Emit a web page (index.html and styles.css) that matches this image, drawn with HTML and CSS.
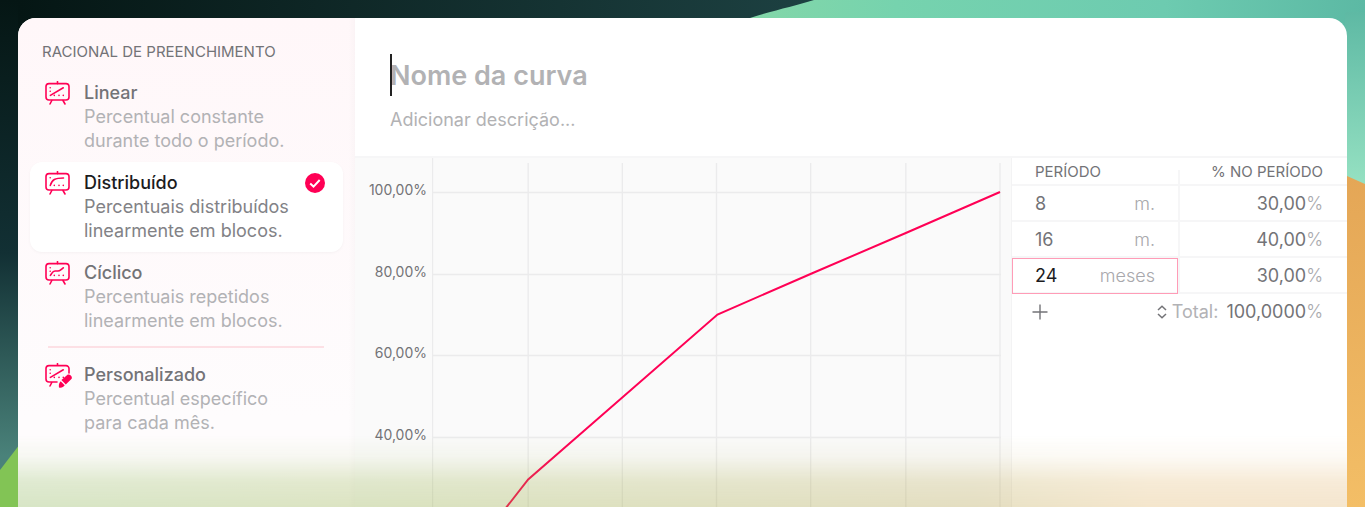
FILE: index.html
```html
<!DOCTYPE html>
<html lang="pt-BR">
<head>
	<meta charset="utf-8">
	<title>Curva</title>
	<link rel="stylesheet" href="styles.css">
</head>
<body>
	<svg class="wallpaper" viewBox="0 0 1365 507" preserveAspectRatio="none" aria-hidden="true">
		<defs>
			<linearGradient id="night" gradientUnits="userSpaceOnUse" x1="0" y1="0" x2="0" y2="507">
				<stop offset="0" stop-color="#051614"/>
				<stop offset=".5" stop-color="#123034"/>
				<stop offset=".9" stop-color="#4a827a"/>
			</linearGradient>
			<linearGradient id="nightTop" x1="0" y1="0" x2="1" y2="0">
				<stop offset="0" stop-color="#051614"/>
				<stop offset="1" stop-color="#1e4344"/>
			</linearGradient>
			<linearGradient id="mint" x1="0" y1="0" x2="1" y2="0">
				<stop offset="0" stop-color="#88d8a6"/>
				<stop offset=".3" stop-color="#76d3ae"/>
				<stop offset=".7" stop-color="#6dcbb0"/>
				<stop offset="1" stop-color="#5cb9a4"/>
			</linearGradient>
			<linearGradient id="mintSide" x1="0" y1="0" x2="0" y2="1">
				<stop offset="0" stop-color="#5eb9a4"/>
				<stop offset="1" stop-color="#9be5c5"/>
			</linearGradient>
			<linearGradient id="sand" x1="0" y1="0" x2="0" y2="1">
				<stop offset="0" stop-color="#e4a656"/>
				<stop offset="1" stop-color="#f3be66"/>
			</linearGradient>
		</defs>
		<rect width="1365" height="507" fill="url(#night)"/>
		<rect x="18" width="840" height="40" fill="url(#nightTop)"/>
		<path d="M695 36L750 18C775 10 795 6 814 0H1365V40H695z" fill="url(#mint)"/>
		<rect x="1345" y="12" width="20" height="190" fill="url(#mintSide)"/>
		<path d="M1340 173L1347 176L1365 184V507H1340z" fill="url(#sand)"/>
		<path d="M0 470L20 444V507H0z" fill="#82c455"/>
	</svg>

	<div class="window">
		<aside class="sidebar">
			<h2 class="caption">RACIONAL DE PREENCHIMENTO</h2>

			<label class="option">
				<input type="radio" name="racional">
				<svg class="option-icon" viewBox="0 1 28 28">
					<rect x="2" y="3.600" width="23" height="16.400" rx="3"/>
					<path d="M13.500 1.600v2M7.800 20.500L6 24M19 20.500L21 24M6.400 15.400L19.300 7.800"/>
					<path class="dots" d="M6.200 7.700h0M6.200 11.200h0M10.300 15.400h0M15 15.400h0M19.300 15.400h0"/>
				</svg>
				<span class="option-text">
					<span class="option-name">Linear</span>
					<span class="option-about">Percentual constante durante todo o período.</span>
				</span>
			</label>

			<label class="option selected">
				<input type="radio" name="racional" checked>
				<svg class="option-icon" viewBox="0 1 28 28">
					<rect x="2" y="3.600" width="23" height="16.400" rx="3"/>
					<path d="M13.500 1.600v2M7.800 20.500L6 24M19 20.500L21 24M6.300 15.400C8 9.500 11 8 19.500 8"/>
					<path class="dots" d="M6.200 7.700h0M10.300 15.400h0M15 15.400h0M19.300 15.400h0"/>
				</svg>
				<span class="option-text">
					<span class="option-name">Distribuído</span>
					<span class="option-about">Percentuais distribuídos linearmente em blocos.</span>
				</span>
				<svg class="check" viewBox="0 0 20 20">
					<circle cx="10" cy="10" r="10"/>
					<path d="M5.200 10.600L8.500 13.600L14.700 7"/>
				</svg>
			</label>

			<label class="option">
				<input type="radio" name="racional">
				<svg class="option-icon" viewBox="0 1 28 28">
					<rect x="2" y="3.600" width="23" height="16.400" rx="3"/>
					<path d="M13.500 1.600v2M7.800 20.500L6 24M19 20.500L21 24M6.400 15.400C8.500 12.500 8.500 11 11 11C16 11 15.500 11 19.300 7.800"/>
					<path class="dots" d="M6.200 7.700h0M6.200 11.200h0M10.300 15.400h0M15 15.400h0M19.300 15.400h0"/>
				</svg>
				<span class="option-text">
					<span class="option-name">Cíclico</span>
					<span class="option-about">Percentuais repetidos linearmente em blocos.</span>
				</span>
			</label>

			<hr class="divider">

			<label class="option">
				<input type="radio" name="racional">
				<svg class="option-icon" viewBox="0 1 28 28">
					<path d="M13 20H5a3 3 0 0 1-3-3V6.600a3 3 0 0 1 3-3H22a3 3 0 0 1 3 3V11M13.500 1.600v2M7.800 20.500L6 24M6.400 15.400L19.300 7.800"/>
					<path class="dots" d="M6.200 7.700h0M6.200 11.200h0M10.300 15.400h0M15 15.400h0M19.300 15.400h0"/>
					<path class="pencil" d="M17.400 18L23.200 12.900C25.300 11.200 29.300 14.700 27.400 17L21.800 22.600zM16.700 19.200L20.700 23.300C19.500 25.200 17.500 26.200 15 25.600C14.500 23 15.200 20.600 16.700 19.200z"/>
				</svg>
				<span class="option-text">
					<span class="option-name">Personalizado</span>
					<span class="option-about">Percentual específico para cada mês.</span>
				</span>
			</label>
		</aside>

		<main class="main">
			<header class="header">
				<div class="name-row">
					<input class="name" type="text" placeholder="Nome da curva" aria-label="Nome da curva">
					<span class="caret"></span>
				</div>
				<input class="about" type="text" placeholder="Adicionar descrição..." aria-label="Adicionar descrição">
			</header>

			<div class="content">
				<section class="chart">
					<div class="axis">
						<span>100,00%</span>
						<span>80,00%</span>
						<span>60,00%</span>
						<span>40,00%</span>
					</div>
					<svg class="plot" viewBox="0 0 568 444" preserveAspectRatio="none">
						<path class="grid" d="M.500 0V444M96 5V444M190 5V444M284 5V444M378 5V444M473 5V444M567 5V444"/>
						<path class="grid" d="M0 34.500H568M0 116.500H568M0 197.500H568M0 279.500H568M0 361.500H568M0 443H568"/>
						<path class="curve" d="M1 443L96 321.500L285 156.500L379 115.500L473 75L567 34"/>
					</svg>
				</section>

				<section class="periods">
					<table>
						<thead>
							<tr><th>PERÍODO</th><th>% NO PERÍODO</th></tr>
						</thead>
						<tbody>
							<tr>
								<td><div class="cell"><input type="text" value="8" aria-label="Período 1"><span>m.</span></div></td>
								<td><div class="cell"><input type="text" value="30,00" aria-label="Percentual 1"><span>%</span></div></td>
							</tr>
							<tr>
								<td><div class="cell"><input type="text" value="16" aria-label="Período 2"><span>m.</span></div></td>
								<td><div class="cell"><input type="text" value="40,00" aria-label="Percentual 2"><span>%</span></div></td>
							</tr>
							<tr>
								<td class="active"><div class="cell"><input type="text" value="24" aria-label="Período 3"><span>meses</span></div></td>
								<td><div class="cell"><input type="text" value="30,00" aria-label="Percentual 3"><span>%</span></div></td>
							</tr>
						</tbody>
					</table>
					<div class="total-row">
						<button class="add" type="button" aria-label="Adicionar">
							<svg viewBox="0 0 16 16"><path d="M8 .500v15M.500 8h15"/></svg>
						</button>
						<button class="total" type="button">
							<svg viewBox="0 0 12 16"><path d="M2 6L6 2.200L10 6M2 10L6 13.800L10 10"/></svg>
							<span class="total-label">Total:</span>
							<span class="total-value">100,0000<i>%</i></span>
						</button>
					</div>
				</section>
			</div>
		</main>
		<div class="haze"></div>
	</div>
</body>
</html>
```
FILE: styles.css
```css
*{
	box-sizing: border-box;
}

body{
	margin: 0;
	height: 100vh;
	padding: 18px 18px 0;
	overflow: hidden;
	display: flex;
	font-family: Inter, "Liberation Sans", sans-serif;
	font-size: 18px;
	line-height: 24px;
	color: #737377;
}

input, button{
	font: inherit;
	color: inherit;
	background: none;
	border: 0;
	padding: 0;
	margin: 0;
	min-width: 0;
	outline: none;
}

.wallpaper{
	position: absolute;
	top: 0;
	left: 0;
	width: 100%;
	height: 100%;
	z-index: -1;
}

.window{
	position: relative;
	flex: 1;
	display: flex;
	overflow: hidden;
	background: #fff;
	border-radius: 18px 18px 0 0;
}

/* sidebar */
.sidebar{
	width: 337px;
	flex: none;
	padding: 22px 12px 0;
	background: linear-gradient(90deg, transparent 330px, rgba(0,0,0,.015)), linear-gradient(#fff7f9, #fefcfd 400px);
}
.caption{
	margin: 0 0 8px;
	padding-left: 12px;
	font-size: 15px;
	font-weight: 400;
}
.option{
	display: flex;
	gap: 12px;
	padding: 9px 18px 9px 14px;
	border-radius: 12px;
}
.option input{
	position: absolute;
	opacity: 0;
}
.option.selected{
	background: #fff;
	box-shadow: 0 1px 3px rgba(0,0,0,.04);
}
.option-icon{
	flex: none;
	width: 28px;
	height: 28px;
	fill: none;
	stroke: #ff0055;
	stroke-width: 1.600;
	stroke-linecap: round;
}
.option-icon .pencil{
	fill: #ff0055;
	stroke: none;
}
.option-text{
	width: 210px;
}
.option-name, .option-about{
	display: block;
}
.option-name{
	font-weight: 500;
}
.option-about{
	color: #b2b2b5;
}
.selected .option-name{
	color: #1c1c1e;
}
.selected .option-about{
	color: #828286;
}
.check{
	flex: none;
	width: 20px;
	height: 20px;
	margin: 2px 0 0 auto;
	fill: #ff0055;
}
.check path{
	fill: none;
	stroke: #fff;
	stroke-width: 2;
}
.divider{
	height: 2px;
	margin: 4px 19px 6px 18px;
	border: 0;
	background: #fde0e5;
}

/* name and description */
.main{
	flex: 1;
	min-width: 0;
	display: flex;
	flex-direction: column;
}
.header{
	display: flex;
	flex-direction: column;
	padding: 36px 35px 24px;
	border-bottom: 2px solid #f6f6f7;
}
.name-row{
	position: relative;
	display: flex;
	margin-bottom: 12px;
}
.name{
	flex: 1;
	height: 42px;
	font-size: 27px;
	font-weight: 600;
}
.header input::placeholder{
	color: #b2b2b4;
	opacity: 1;
}
.about{
	height: 24px;
}
.caret{
	position: absolute;
	left: 0;
	top: 0;
	width: 2px;
	height: 42px;
	background: #222;
}

/* chart */
.content{
	flex: 1;
	min-height: 0;
	display: flex;
}
.chart{
	flex: 1;
	min-width: 0;
	display: flex;
	padding-right: 10px;
	overflow: hidden;
	background: #fafafa;
	border-right: 1px solid #f3f3f4;
}
.axis{
	width: 77px;
	height: 269px;
	padding-right: 5px;
	margin-top: 20px;
	flex: none;
	display: flex;
	flex-direction: column;
	justify-content: space-between;
	text-align: right;
	font-size: 14px;
}
.plot{
	flex: 1;
	min-width: 0;
	height: 444px;
	fill: none;
}
.grid{
	stroke: #ebebec;
	stroke-width: 1.400;
	vector-effect: non-scaling-stroke;
}
.curve{
	stroke: #ff0055;
	stroke-width: 2;
	vector-effect: non-scaling-stroke;
}

/* periods */
.periods{
	width: 335px;
	flex: none;
}
.periods table{
	width: 100%;
	table-layout: fixed;
	border-spacing: 0;
}
.periods th{
	height: 28px;
	padding: 2px 24px 0 23px;
	border-bottom: 2px solid #f6f6f7;
	font-size: 15px;
	font-weight: 400;
	text-align: left;
}
.periods th:first-child{
	width: 166px;
}
.periods th:last-child{
	padding-left: 0;
	text-align: right;
	background: linear-gradient(#f6f6f7, #f6f6f7) 0 100% / 2px 14px no-repeat;
}
.periods td{
	height: 36px;
	padding: 2px 24px 0 23px;
	border-bottom: 2px solid #f6f6f7;
}
.periods td:first-child{
	padding-right: 23px;
}
.periods td + td{
	border-left: 2px solid #f6f6f7;
}
.cell{
	display: flex;
	justify-content: space-between;
}
.cell input{
	flex: 1;
	width: 0;
}
.cell span{
	color: #a8a8ac;
	font-weight: 300;
}
td + td .cell input{
	text-align: right;
}
.periods .active{
	color: #1c1c1e;
	outline: 1px solid #ff9cb7;
	outline-offset: -1px;
}
.total-row{
	display: flex;
	justify-content: space-between;
	align-items: center;
	height: 36px;
	padding: 0 24px 0 20px;
}
.add{
	display: flex;
}
.add svg{
	width: 16px;
	height: 16px;
	stroke: #737377;
	stroke-width: 1.400;
}
.total{
	display: flex;
	align-items: center;
}
.total svg{
	width: 12px;
	height: 16px;
	margin-right: 4px;
	fill: none;
	stroke: #737377;
	stroke-width: 1.500;
}
.total-label{
	margin-right: 8px;
	color: #b2b2b5;
}
.total-value i{
	font-style: normal;
	font-weight: 300;
	color: #a8a8ac;
}

/* wallpaper colours showing through the bottom edge */
.haze{
	position: absolute;
	left: 0;
	right: 0;
	bottom: 0;
	height: 72px;
	pointer-events: none;
	opacity: .3;
	background: linear-gradient(90deg, #80b248, #91ac3a 30%, #b29e3e 72%, #dcac58 85%, #deac5f);
	-webkit-mask-image: linear-gradient(transparent, rgba(0,0,0,.2) 30%, rgba(0,0,0,.8) 65%, #000);
	mask-image: linear-gradient(transparent, rgba(0,0,0,.2) 30%, rgba(0,0,0,.8) 65%, #000);
}
```
